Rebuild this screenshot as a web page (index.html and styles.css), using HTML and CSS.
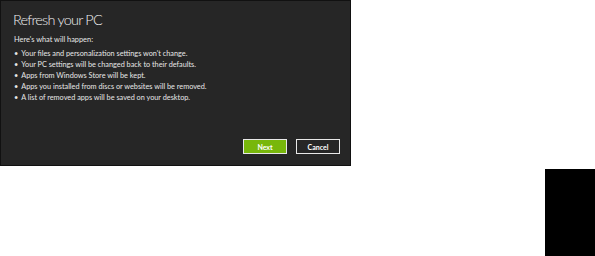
FILE: index.html
```html
<!DOCTYPE html>
<html lang="en">
<head>
    <meta charset="UTF-8">
    <title>Refresh your PC</title>
    <link rel="stylesheet" href="styles.css">
</head>
<body>
    <div class="dialog">
        <h2>Refresh your PC</h2>
        <p class="intro">Here's what will happen:</p>
        <ul class="changes">
            <li>Your files and personalization settings won't change.</li>
            <li>Your PC settings will be changed back to their defaults.</li>
            <li>Apps from Windows Store will be kept.</li>
            <li>Apps you installed from discs or websites will be removed.</li>
            <li>A list of removed apps will be saved on your desktop.</li>
        </ul>
        <div class="buttons">
            <button class="btn next">Next</button>
            <button class="btn cancel">Cancel</button>
        </div>
    </div>
    <div class="side">
        <div class="tab"></div>
    </div>
</body>
</html>
```

FILE: styles.css
```css
body {
    margin: 0;
    background-color: #fff;
    font-family: Lato, "Open Sans", sans-serif;
}

.dialog {
    width: 351px;
    height: 166px;
    box-sizing: border-box;
    background-color: #262626;
    border: 1px solid #111;
    color: #e6e6e6;
    padding: 10px 10px 0 12px;
    display: flex;
    flex-direction: column;
}

h2 {
    margin: 0;
    font-size: 14.5px;
    font-weight: 300;
    letter-spacing: -0.8px;
    line-height: 18px;
    color: #f0f0f0;
}

.intro {
    margin: 6px 0 0 1px;
    font-size: 7.4px;
    line-height: 10px;
}

.changes {
    margin: 4px 0 0 1px;
    padding: 0;
    list-style: none;
    font-size: 7.3px;
    line-height: 10.9px;
}

.changes li::before {
    content: "\2022";
    margin-right: 3px;
}

.buttons {
    margin-top: auto;
    margin-bottom: 11px;
    display: flex;
    justify-content: flex-end;
    gap: 9px;
}

.btn {
    width: 44px;
    height: 15px;
    padding: 0;
    font-family: inherit;
    font-size: 7px;
    font-weight: 700;
    color: #fff;
    border: 1px solid #e8e8e8;
    cursor: pointer;
}

.next {
    background-color: #78b70b;
}

.cancel {
    background-color: #262626;
}

.side {
    display: flex;
    justify-content: flex-end;
    margin-top: 3px;
}

.tab {
    width: 50px;
    height: 87px;
    background-color: #000;
}
```
